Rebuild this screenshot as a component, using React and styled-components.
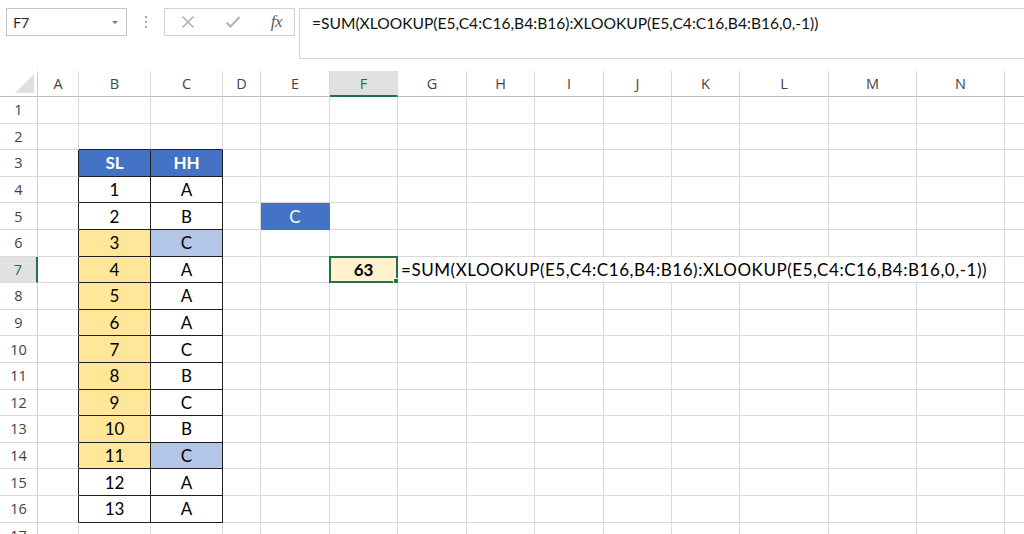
import React from "react"
import styled, { createGlobalStyle } from "styled-components"

const GlobalStyle = createGlobalStyle`
  html, body {
    margin: 0;
    padding: 0;
    background: #ffffff;
    overflow: hidden;
  }
`

const FORMULA = "=SUM(XLOOKUP(E5,C4:C16,B4:B16):XLOOKUP(E5,C4:C16,B4:B16,0,-1))"
const COLS = ["A", "B", "C", "D", "E", "F", "G", "H", "I", "J", "K", "L", "M", "N", "O"]
const WIDTHS = [41, 72, 72, 38, 69, 68, 69, 68, 69, 68, 68, 89, 88, 88, 60]
const HH = ["A", "B", "C", "A", "A", "A", "C", "B", "C", "B", "C", "A", "A"]

const BLUE = "#4472c4"
const YELLOW = "#ffe699"
const LIGHT_BLUE = "#b4c6e7"
const GREEN = "#217346"
const GRID = "#dadada"

// build the sheet content: rows 1..17, columns A..O
const buildRows = () => {
  const rows = []
  for (let r = 1; r <= 17; r++) {
    const cells = []
    for (let c = 0; c < COLS.length; c++) {
      const col = COLS[c]
      const cell = { key: col, text: "" }
      const inTable = r >= 3 && r <= 16
      if (inTable && (col === "B" || col === "C")) {
        cell.rightDark = true
        cell.bottomDark = true
        if (r === 3) {
          cell.text = col === "B" ? "SL" : "HH"
          cell.bg = BLUE
          cell.color = "#ffffff"
          cell.bold = true
        } else if (col === "B") {
          cell.text = String(r - 3)
          if (r >= 6 && r <= 14) cell.bg = YELLOW
        } else {
          cell.text = HH[r - 4]
          if (r === 6 || r === 14) cell.bg = LIGHT_BLUE
        }
      }
      if (inTable && col === "A") cell.rightDark = true
      if (r === 2 && (col === "B" || col === "C")) cell.bottomDark = true
      if (r === 5 && col === "E") {
        cell.text = "C"
        cell.bg = BLUE
        cell.color = "#ffffff"
      }
      if (r === 7 && col === "F") {
        cell.text = "63"
        cell.bg = "#fff2cc"
        cell.bold = true
        cell.selected = true
      }
      if (r === 7 && col === "G") {
        // text overflowing from G7 across to N7
        cell.text = FORMULA
        cell.span = 8
        cell.align = "left"
        c += 7
      }
      cells.push(cell)
    }
    rows.push({ n: r, cells })
  }
  return rows
}

const ROWS = buildRows()

const Page = styled.div`
  width: 1024px;
  height: 534px;
  overflow: hidden;
  background: #ffffff;
  display: flex;
  flex-direction: column;
`

const TopBar = styled.div`
  height: 71px;
  flex: none;
  display: flex;
  align-items: flex-start;
  padding: 8px 0 0 6px;
  box-sizing: border-box;
`

const NameBox = styled.div`
  width: 121px;
  height: 28px;
  box-sizing: border-box;
  border: 1px solid #c6c6c6;
  display: flex;
  align-items: center;
  justify-content: space-between;
  padding: 0 8px 0 6px;
  font-family: "Open Sans", "Noto Sans", sans-serif;
  font-size: 15px;
  color: #222;
`

const Caret = styled.span`
  width: 0;
  height: 0;
  border-left: 3px solid transparent;
  border-right: 3px solid transparent;
  border-top: 3px solid #777;
`

const Dots = styled.div`
  width: 37px;
  height: 28px;
  display: flex;
  flex-direction: column;
  align-items: center;
  justify-content: center;
  gap: 3px;

  span {
    width: 2px;
    height: 2px;
    background: #a8a8a8;
  }
`

const ButtonGroup = styled.div`
  width: 131px;
  height: 28px;
  box-sizing: border-box;
  border: 1px solid #d2d2d2;
  display: flex;
  align-items: center;
  justify-content: space-between;
  padding: 0 12px 0 16px;
`

const FxLabel = styled.span`
  font-family: "Liberation Serif", "DejaVu Serif", serif;
  font-style: italic;
  font-size: 17px;
  color: #5c5c5c;
  letter-spacing: -0.5px;
`

const FormulaBox = styled.div`
  margin-left: 4px;
  flex: 1;
  height: 51px;
  box-sizing: border-box;
  border: 1px solid #d4d4d4;
  border-right: none;
  padding: 5px 0 0 12px;
  font-family: "Lato", "Open Sans", sans-serif;
  font-size: 15.6px;
  color: #111;
  white-space: nowrap;
`

const Sheet = styled.div`
  display: grid;
  grid-template-columns: 38px ${WIDTHS.map((w) => `${w}px`).join(" ")};
  grid-template-rows: 26px repeat(17, 26.6px);
`

const Corner = styled.div`
  border-right: 1px solid #d0d0d0;
  border-bottom: 1px solid #bdbdbd;
  box-sizing: border-box;
  display: flex;
  align-items: flex-end;
  justify-content: flex-end;
  padding: 0 3px 3px 0;

  &::after {
    content: "";
    width: 0;
    height: 0;
    border-left: 19px solid transparent;
    border-bottom: 19px solid #dfdfdf;
  }
`

const ColHead = styled.div`
  box-sizing: border-box;
  background: ${(p) => (p.$active ? "#e1e1e1" : "#ffffff")};
  border-right: 1px solid ${GRID};
  border-bottom: ${(p) => (p.$active ? `2px solid ${GREEN}` : "1px solid #bdbdbd")};
  display: flex;
  align-items: center;
  justify-content: center;
  font-family: "Open Sans", "Noto Sans", sans-serif;
  font-size: 14.5px;
  color: ${(p) => (p.$active ? GREEN : "#444")};
`

const RowHead = styled.div`
  box-sizing: border-box;
  background: ${(p) => (p.$active ? "#e1e1e1" : "#ffffff")};
  border-right: ${(p) => (p.$active ? `2px solid ${GREEN}` : "1px solid #d0d0d0")};
  border-bottom: 1px solid ${GRID};
  display: flex;
  align-items: center;
  justify-content: center;
  font-family: "Open Sans", "Noto Sans", sans-serif;
  font-size: 14.5px;
  color: ${(p) => (p.$active ? GREEN : "#444")};
`

const Cell = styled.div`
  position: relative;
  box-sizing: border-box;
  grid-column: ${(p) => (p.$span ? `span ${p.$span}` : "auto")};
  background: ${(p) => p.$bg || "#ffffff"};
  border-right: 1px solid ${(p) => (p.$rightDark ? "#1e1e1e" : p.$bg || GRID)};
  border-bottom: 1px solid ${(p) => (p.$bottomDark ? "#1e1e1e" : p.$bg || GRID)};
  display: flex;
  align-items: center;
  justify-content: ${(p) => (p.$align === "left" ? "flex-start" : "center")};
  padding: ${(p) => (p.$align === "left" ? "0 0 0 3px" : "0")};
  font-family: "Lato", "Open Sans", sans-serif;
  font-size: 17px;
  letter-spacing: ${(p) => (p.$align === "left" ? "0.55px" : "0")};
  font-weight: ${(p) => (p.$bold ? 700 : 400)};
  color: ${(p) => p.$color || "#000"};
  white-space: nowrap;
`

const Selection = styled.div`
  position: absolute;
  left: -1px;
  top: -1px;
  right: -1px;
  bottom: -1px;
  border: 2px solid ${GREEN};
  pointer-events: none;

  &::after {
    content: "";
    position: absolute;
    right: -4px;
    bottom: -4px;
    width: 5px;
    height: 5px;
    background: ${GREEN};
    border: 1px solid #ffffff;
  }
`

const CrossIcon = () => (
  <svg width="14" height="14" viewBox="0 0 14 14">
    <path d="M1.5 1.5 L12.5 12.5 M12.5 1.5 L1.5 12.5" stroke="#a9a9a9" strokeWidth="1.4" fill="none" />
  </svg>
)

const CheckIcon = () => (
  <svg width="16" height="14" viewBox="0 0 16 14">
    <path d="M1.5 7.5 L5.5 11.5 L14.5 2" stroke="#b4b4b4" strokeWidth="2" fill="none" />
  </svg>
)

const App = () => (
  <>
    <GlobalStyle />
    <Page>
      <TopBar>
        <NameBox>
          F7
          <Caret />
        </NameBox>
        <Dots>
          <span />
          <span />
          <span />
        </Dots>
        <ButtonGroup>
          <CrossIcon />
          <CheckIcon />
          <FxLabel>fx</FxLabel>
        </ButtonGroup>
        <FormulaBox>{FORMULA}</FormulaBox>
      </TopBar>
      <Sheet>
        <Corner />
        {COLS.map((c) => (
          <ColHead key={c} $active={c === "F"}>
            {c}
          </ColHead>
        ))}
        {ROWS.map((row) => (
          <React.Fragment key={row.n}>
            <RowHead $active={row.n === 7}>{row.n}</RowHead>
            {row.cells.map((cell) => (
              <Cell
                key={cell.key}
                $bg={cell.bg}
                $color={cell.color}
                $bold={cell.bold}
                $rightDark={cell.rightDark}
                $bottomDark={cell.bottomDark}
                $span={cell.span}
                $align={cell.align}
              >
                {cell.text}
                {cell.selected && <Selection />}
              </Cell>
            ))}
          </React.Fragment>
        ))}
      </Sheet>
    </Page>
  </>
)

export default App
